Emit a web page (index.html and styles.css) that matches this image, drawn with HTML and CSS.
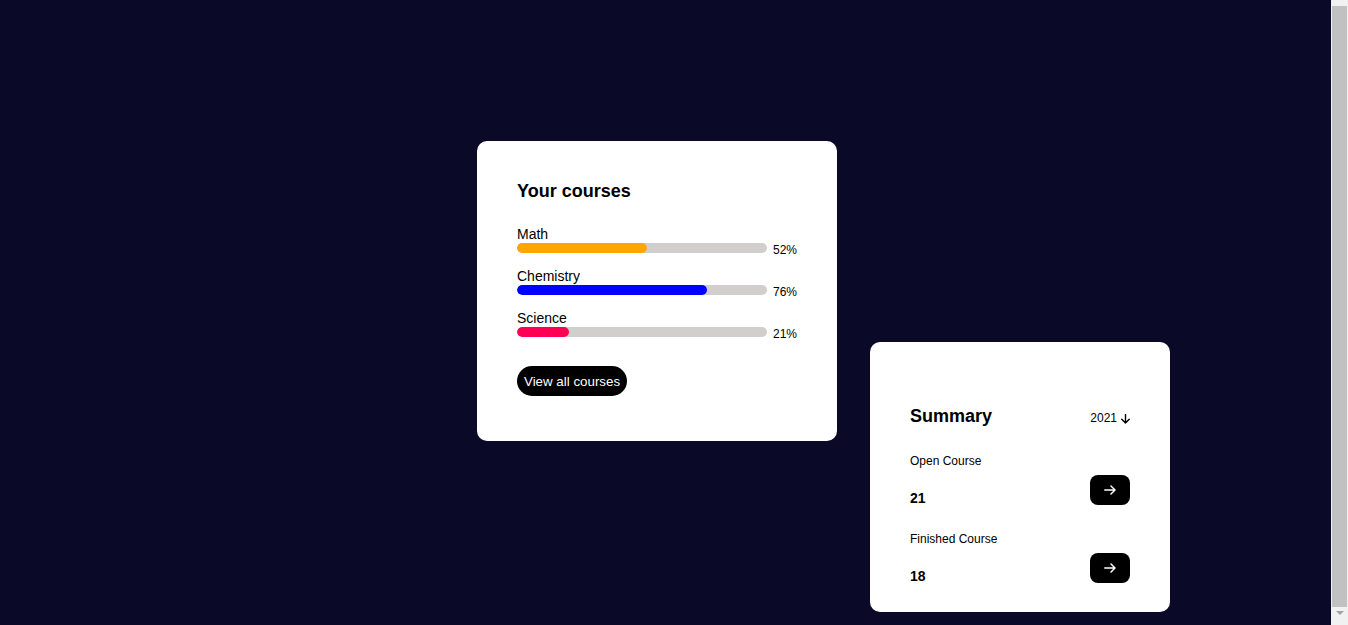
FILE: index.html
```html
<!DOCTYPE html>
<html lang="en">
<head>
<meta charset="utf-8">
<title>Courses</title>
<link rel="stylesheet" href="styles.css">
</head>
<body>
<main class="page">
  <section class="card courses">
    <h2 class="card-title">Your courses</h2>
    <div class="course-list">
      <div class="course">
        <div class="course-name">Math</div>
        <div class="course-row">
          <div class="track"><div class="fill fill-orange" style="width:52%"></div></div>
          <span class="pct">52%</span>
        </div>
      </div>
      <div class="course">
        <div class="course-name">Chemistry</div>
        <div class="course-row">
          <div class="track"><div class="fill fill-blue" style="width:76%"></div></div>
          <span class="pct">76%</span>
        </div>
      </div>
      <div class="course">
        <div class="course-name">Science</div>
        <div class="course-row">
          <div class="track"><div class="fill fill-pink" style="width:21%"></div></div>
          <span class="pct">21%</span>
        </div>
      </div>
    </div>
    <button class="pill-btn" type="button">View all courses</button>
  </section>

  <section class="card summary">
    <div class="summary-head">
      <h2 class="card-title">Summary</h2>
      <div class="year">2021
        <svg class="down" width="9" height="10" viewBox="0 0 9 10" aria-hidden="true">
          <path d="M4.5 0.5 V9 M0.8 5.3 L4.5 9 L8.2 5.3" fill="none" stroke="#000" stroke-width="1.4" stroke-linecap="round" stroke-linejoin="round"/>
        </svg>
      </div>
    </div>
    <div class="stats">
      <div class="stat">
        <div class="stat-text">
          <div class="stat-label">Open Course</div>
          <div class="stat-value">21</div>
        </div>
        <button class="arrow-btn" type="button" aria-label="Open courses">
          <svg width="12" height="10" viewBox="0 0 12 10" aria-hidden="true">
            <path d="M0.8 5 H11 M7 1 L11 5 L7 9" fill="none" stroke="#fff" stroke-width="1.5" stroke-linecap="round" stroke-linejoin="round"/>
          </svg>
        </button>
      </div>
      <div class="stat">
        <div class="stat-text">
          <div class="stat-label">Finished Course</div>
          <div class="stat-value">18</div>
        </div>
        <button class="arrow-btn" type="button" aria-label="Finished courses">
          <svg width="12" height="10" viewBox="0 0 12 10" aria-hidden="true">
            <path d="M0.8 5 H11 M7 1 L11 5 L7 9" fill="none" stroke="#fff" stroke-width="1.5" stroke-linecap="round" stroke-linejoin="round"/>
          </svg>
        </button>
      </div>
    </div>
  </section>
</main>
<div class="fake-scrollbar" aria-hidden="true">
  <div class="fake-thumb"></div>
  <div class="fake-arrow"></div>
</div>
</body>
</html>
```

FILE: styles.css
```css
* { box-sizing: border-box; }

html, body {
  background: #0a0928;
}

body {
  margin: 8px;
  font-family: "Liberation Sans", Arial, sans-serif;
  color: #000;
}

.page {
  min-height: 100vh;
  display: flex;
  align-items: flex-start;
  gap: 33px;
  padding: 133px 0 0 469px;
}

.card {
  background: #fff;
  border-radius: 10px;
}

.card-title {
  margin: 0;
  font-size: 18px;
  line-height: 21px;
  font-weight: bold;
}

/* Courses card */
.courses {
  width: 360px;
  height: 300px;
  padding: 40px 40px 0 40px;
}

.course-list {
  margin-top: 25px;
  display: flex;
  flex-direction: column;
  gap: 11px;
}

.course-name {
  font-size: 14px;
  line-height: 14px;
  margin-bottom: 2px;
}

.course-row {
  display: flex;
  align-items: flex-start;
  gap: 6px;
  height: 15px;
}

.track {
  width: 250px;
  height: 10px;
  border-radius: 5px;
  background: #d2cece;
  overflow: hidden;
}

.fill {
  height: 100%;
  border-radius: 5px;
}

.fill-orange { background: #ffa500; }
.fill-blue { background: #0000ff; }
.fill-pink { background: #ff0055; }

.pct {
  font-size: 12px;
  line-height: 14px;
}

.pill-btn {
  margin-top: 24px;
  height: 30px;
  padding: 0 7px;
  border: none;
  border-radius: 15px;
  background: #000;
  color: #fff;
  font-family: "Liberation Sans", Arial, sans-serif;
  font-size: 13.333px;
  cursor: pointer;
}

/* Summary card */
.summary {
  width: 300px;
  margin-top: 201px;
  padding: 64px 40px 27px 40px;
}

.summary-head {
  display: flex;
  justify-content: space-between;
  align-items: baseline;
  margin-bottom: 27px;
}

.year {
  display: flex;
  align-items: center;
  gap: 4px;
  font-size: 12px;
  line-height: 14px;
}

.down {
  display: block;
  margin-top: 1px;
}

.stats {
  display: flex;
  flex-direction: column;
  gap: 25px;
}

.stat {
  display: flex;
  justify-content: space-between;
  align-items: flex-start;
}

.stat-label {
  font-size: 12px;
  line-height: 14px;
}

.stat-value {
  margin-top: 22px;
  font-size: 14px;
  line-height: 17px;
  font-weight: bold;
}

.arrow-btn {
  margin-top: 21px;
  width: 40px;
  height: 30px;
  border: none;
  border-radius: 8px;
  background: #000;
  display: flex;
  align-items: center;
  justify-content: center;
  padding: 0;
  cursor: pointer;
}

.arrow-btn svg { display: block; }

/* Imitation of the browser's vertical scrollbar seen in the reference */
.fake-scrollbar {
  position: fixed;
  top: 0;
  right: 0;
  width: 17px;
  height: 100vh;
  background: #f1f1f1;
  display: flex;
  flex-direction: column;
  align-items: center;
  padding-top: 6px;
}

.fake-thumb {
  width: 15px;
  height: 601px;
  background: #c1c1c1;
}

.fake-arrow {
  margin-top: 4px;
  width: 0;
  height: 0;
  border-left: 4px solid transparent;
  border-right: 4px solid transparent;
  border-top: 4px solid #a3a3a3;
}
```
